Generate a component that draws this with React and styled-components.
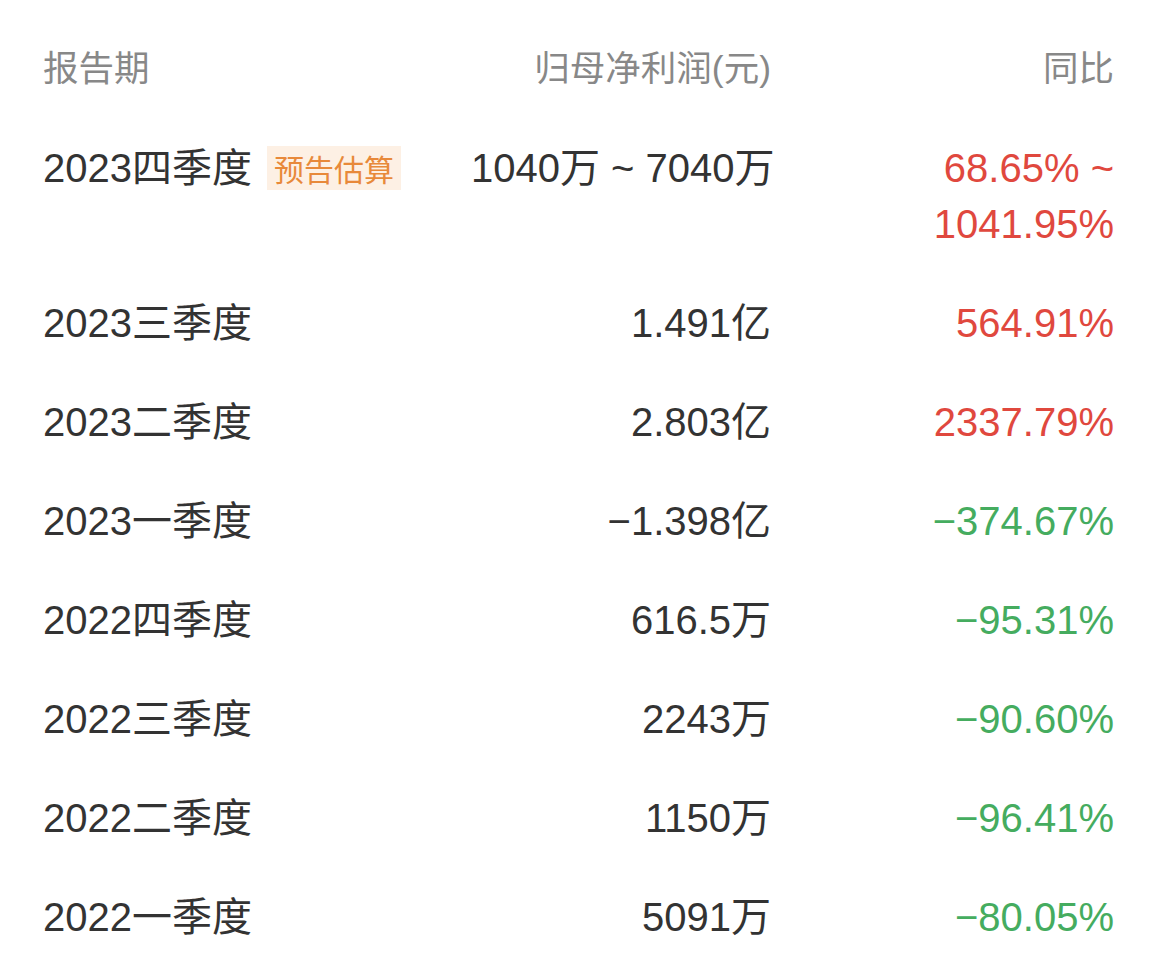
import React from "react"
import styled, { createGlobalStyle } from "styled-components"

const GlobalStyle = createGlobalStyle`
  body {
    margin: 0;
    background: #fff;
    font-family: "Liberation Sans", "Noto Sans CJK SC", sans-serif;
  }
`

const Table = styled.div`
  padding: 20px 50px 0 43px;
`

const Row = styled.div`
  display: grid;
  grid-template-columns: 1fr 300px 343px;
  padding: 21px 0 22px;
  line-height: 56px;
  font-size: ${(p) => (p.head ? "35.5px" : "40px")};
  color: ${(p) => (p.head ? "#888" : "#333")};
`

const Period = styled.div`
  display: flex;
  align-items: center;
  height: 56px;
`

const Cell = styled.div`
  text-align: right;
  white-space: nowrap;
  color: ${(p) => p.tone || "inherit"};
`

const Badge = styled.span`
  margin-left: 15px;
  padding: 0 7px;
  height: 44px;
  line-height: 44px;
  font-size: 30px;
  color: #e8893a;
  background: #fdf0e4;
  font-family: "Noto Sans CJK SC", sans-serif;
`

const RED = "#e0483e"
const GREEN = "#45ac5f"

const rows = [
  { period: "2023三季度", profit: "1.491亿", yoy: "564.91%", tone: RED },
  { period: "2023二季度", profit: "2.803亿", yoy: "2337.79%", tone: RED },
  { period: "2023一季度", profit: "−1.398亿", yoy: "−374.67%", tone: GREEN },
  { period: "2022四季度", profit: "616.5万", yoy: "−95.31%", tone: GREEN },
  { period: "2022三季度", profit: "2243万", yoy: "−90.60%", tone: GREEN },
  { period: "2022二季度", profit: "1150万", yoy: "−96.41%", tone: GREEN },
  { period: "2022一季度", profit: "5091万", yoy: "−80.05%", tone: GREEN },
]

export default function App() {
  return (
    <>
      <GlobalStyle />
      <Table>
        <Row head>
          <div>报告期</div>
          <Cell>归母净利润(元)</Cell>
          <Cell>同比</Cell>
        </Row>
        <Row>
          <Period>
            2023四季度<Badge>预告估算</Badge>
          </Period>
          <Cell>1040万 ~ 7040万</Cell>
          <Cell tone={RED}>
            68.65% ~
            <br />
            1041.95%
          </Cell>
        </Row>
        {rows.map((r) => (
          <Row key={r.period}>
            <Period>{r.period}</Period>
            <Cell>{r.profit}</Cell>
            <Cell tone={r.tone}>{r.yoy}</Cell>
          </Row>
        ))}
      </Table>
    </>
  )
}
